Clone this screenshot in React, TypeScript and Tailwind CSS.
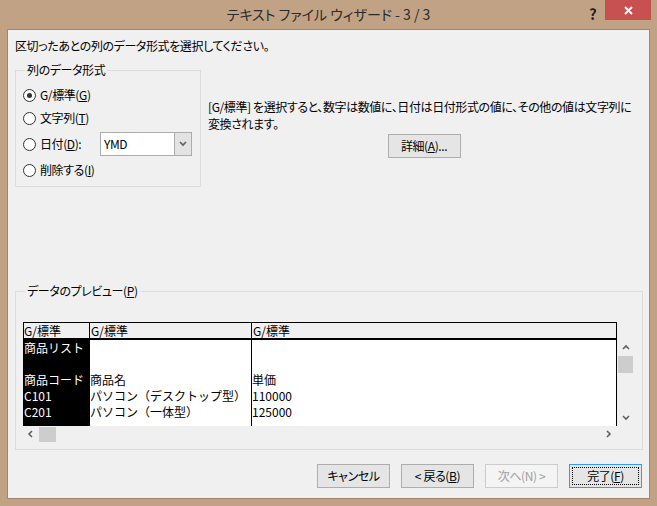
import React from "react";

function Radio({ checked, children }: { checked?: boolean; children: React.ReactNode }) {
  return (
    <div className="flex items-center h-[16px]">
      <span className="w-[13px] h-[13px] rounded-full border border-[#333333] bg-white flex items-center justify-center">
        {checked && <span className="w-[5px] h-[5px] rounded-full bg-[#333333]" />}
      </span>
      <span className="ml-[4px]">{children}</span>
    </div>
  );
}

function Chevron({ dir }: { dir: "up" | "down" | "left" | "right" }) {
  const d = {
    up: "M1 5 L4 2 L7 5",
    down: "M1 2 L4 5 L7 2",
    left: "M5 1 L2 4 L5 7",
    right: "M2 1 L5 4 L2 7",
  }[dir];
  return (
    <svg width="8" height="8" viewBox="0 0 8 8">
      <path d={d} fill="none" stroke="#606060" strokeWidth="1.6" />
    </svg>
  );
}

function Btn({ children, disabled, primary }: { children: React.ReactNode; disabled?: boolean; primary?: boolean }) {
  if (primary) {
    return (
      <div className="w-[73px] h-[24px] border border-[#3399ff] bg-[#e5e5e5] p-[2px]">
        <div className="w-full h-full border border-dotted border-black flex items-center justify-center">{children}</div>
      </div>
    );
  }
  return (
    <div
      className={
        disabled
          ? "w-[73px] h-[24px] border border-[#cccccc] bg-[#f4f4f4] text-[#a0a0a0] flex items-center justify-center"
          : "w-[73px] h-[24px] border border-[#adadad] bg-[#e5e5e5] flex items-center justify-center"
      }
    >
      {children}
    </div>
  );
}

const rows = [
  ["商品リスト", "", ""],
  ["", "", ""],
  ["商品コード", "商品名", "単価"],
  ["C101", "パソコン（デスクトップ型）", "110000"],
  ["C201", "パソコン（一体型）", "125000"],
];

export default function App() {
  return (
    <div className="w-[657px] h-[506px] bg-[#c2a284] flex flex-col text-[12px] text-black font-['Noto_Sans_CJK_JP',sans-serif] [font-feature-settings:'palt']">
      {/* タイトルバー */}
      <div className="h-[29px] relative flex items-center justify-center">
        <span className="text-[14px] text-[#2b2b2b] whitespace-pre">テキスト ファイル ウィザード - 3 / 3</span>
        <span className="absolute left-[589px] top-[3px] text-[15px] font-bold text-[#222222]">?</span>
        <div className="absolute right-[6px] top-0 w-[46px] h-[20px] bg-[#c75050] flex items-center justify-center">
          <svg width="9" height="9" viewBox="0 0 9 9">
            <path d="M1 1 L8 8 M8 1 L1 8" stroke="white" strokeWidth="2" />
          </svg>
        </div>
      </div>

      {/* 本体 */}
      <div className="mx-[7px] h-[470px] border border-[#a3866b] bg-[#f0f0f0] flex flex-col tracking-[-0.4px]">
        <p className="pl-[7px] pt-[8px] leading-[16px]">区切ったあとの列のデータ形式を選択してください。</p>

        <div className="mt-[8px] flex">
          <fieldset className="ml-[7px] w-[186px] border border-[#dcdcdc] pl-[7px] pt-[9px] pb-[8px] flex flex-col">
            <legend className="ml-[2px] px-[2px] leading-[16px]">列のデータ形式</legend>
            <Radio checked>
              G/標準(<u>G</u>)
            </Radio>
            <div className="mt-[7px]">
              <Radio>
                文字列(<u>T</u>)
              </Radio>
            </div>
            <div className="mt-[6px] h-[24px] flex items-center">
              <span className="w-[13px] h-[13px] rounded-full border border-[#333333] bg-white" />
              <span className="ml-[4px] w-[60px]">
                日付(<u>D</u>):
              </span>
              <div className="w-[92px] h-[24px] border border-[#acacac] bg-white flex">
                <span className="flex-1 pl-[3px] leading-[22px]">YMD</span>
                <span className="w-[17px] h-full bg-[#e3e3e3] border-l border-[#acacac] flex items-center justify-center">
                  <Chevron dir="down" />
                </span>
              </div>
            </div>
            <div className="mt-[6px]">
              <Radio>
                削除する(<u>I</u>)
              </Radio>
            </div>
          </fieldset>

          <div className="ml-[7px] w-[432px] pt-[36px] flex flex-col">
            <p className="leading-[17px] whitespace-nowrap">
              [G/標準] を選択すると、数字は数値に、日付は日付形式の値に、その他の値は文字列に
              <br />
              変換されます。
            </p>
            <div className="mt-[2px] flex justify-center">
              <Btn>
                詳細(<u>A</u>)...
              </Btn>
            </div>
          </div>
        </div>

        {/* プレビュー */}
        <fieldset className="mt-[96px] ml-[7px] w-[628px] border border-[#dcdcdc] pl-[7px] pt-[23px] pb-[7px]">
          <legend className="ml-[2px] px-[2px] leading-[16px]">
            データのプレビュー(<u>P</u>)
          </legend>
          <div className="flex items-start tracking-normal [font-feature-settings:normal]">
            <div className="w-[594px] flex flex-col">
              <div className="h-[18px] border-t border-b-2 border-black flex leading-[15px] bg-[#f0f0f0]">
                <div className="w-[66px] border-l border-black">G/標準</div>
                <div className="w-[162px] border-l border-black pl-[1px]">G/標準</div>
                <div className="flex-1 border-l border-r border-black pl-[1px]">G/標準</div>
              </div>
              <div className="h-[86px] flex overflow-hidden">
                <div className="w-[66px] bg-black text-white pl-[1px]">
                  {rows.map((r, i) => (
                    <div key={i} className="h-[16px] leading-[16px] whitespace-nowrap">{r[0]}</div>
                  ))}
                </div>
                <div className="w-[162px] bg-white border-l border-black">
                  {rows.map((r, i) => (
                    <div key={i} className="h-[16px] leading-[16px] whitespace-nowrap">{r[1]}</div>
                  ))}
                </div>
                <div className="flex-1 bg-white border-l border-r border-black">
                  {rows.map((r, i) => (
                    <div key={i} className="h-[16px] leading-[16px] whitespace-nowrap">{r[2]}</div>
                  ))}
                </div>
              </div>
              <div className="h-[16px] flex items-center">
                <span className="w-[16px] flex justify-center">
                  <Chevron dir="left" />
                </span>
                <span className="w-[17px] h-[15px] bg-[#cdcdcd]" />
                <span className="flex-1" />
                <span className="w-[16px] flex justify-center">
                  <Chevron dir="right" />
                </span>
              </div>
            </div>
            <div className="w-[17px] h-[104px] pt-[18px] flex flex-col items-center">
              <span className="h-[16px] flex items-center">
                <Chevron dir="up" />
              </span>
              <span className="w-[15px] h-[17px] bg-[#cdcdcd]" />
              <span className="flex-1" />
              <span className="h-[17px] flex items-center">
                <Chevron dir="down" />
              </span>
            </div>
          </div>
        </fieldset>

        {/* ボタン */}
        <div className="mt-[14px] pr-[7px] flex justify-end gap-[11px]">
          <Btn>キャンセル</Btn>
          <Btn>
            &lt; 戻る(<u>B</u>)
          </Btn>
          <Btn disabled>次へ(N) &gt;</Btn>
          <Btn primary>
            完了(<u>F</u>)
          </Btn>
        </div>
      </div>
    </div>
  );
}
